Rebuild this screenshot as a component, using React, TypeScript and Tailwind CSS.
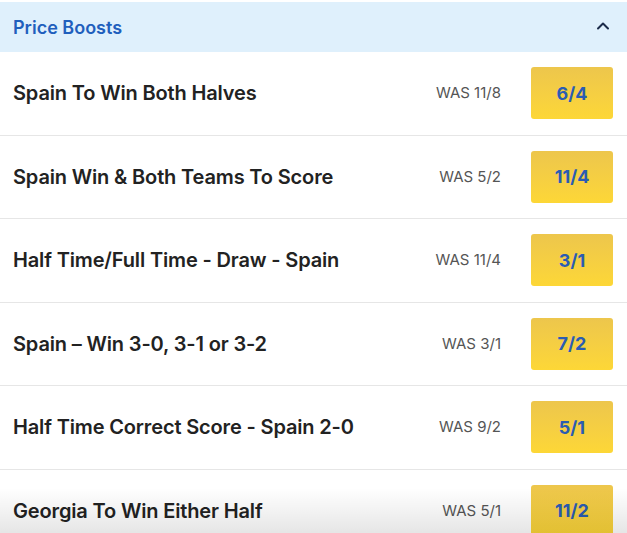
const boosts = [
  { name: "Spain To Win Both Halves", was: "11/8", price: "6/4" },
  { name: "Spain Win & Both Teams To Score", was: "5/2", price: "11/4" },
  { name: "Half Time/Full Time - Draw - Spain", was: "11/4", price: "3/1" },
  { name: "Spain – Win 3-0, 3-1 or 3-2", was: "3/1", price: "7/2" },
  { name: "Half Time Correct Score - Spain 2-0", was: "9/2", price: "5/1" },
  { name: "Georgia To Win Either Half", was: "5/1", price: "11/2" },
];

const App = () => {
  return (
    <div className="relative h-[533px] w-[627px] overflow-hidden bg-white font-['Inter',sans-serif]">
      <div className="mt-[2px] flex h-[50px] items-center justify-between bg-[#dff0fc] pl-[13px] pr-[14px]">
        <span className="text-[18px] font-semibold text-[#1f5fbd]">Price Boosts</span>
        <svg viewBox="0 0 24 24" fill="none" stroke="#1b2b4a" strokeWidth="2.4" strokeLinecap="round" strokeLinejoin="round" className="-mt-[3px] h-[20px] w-[20px]">
          <polyline points="6 15 12 9 18 15" />
        </svg>
      </div>

      {boosts.map((b) => (
        <div
          key={b.name}
          className="flex h-[83.5px] items-center border-b border-[#e6e6e6] pl-[13px] pr-[14px]"
        >
          <span className="flex-1 text-[20px] font-semibold tracking-[-0.15px] text-[#222]">{b.name}</span>
          <span className="mr-[30px] text-[15px] text-[#555]">WAS {b.was}</span>
          <button className="flex h-[52px] w-[82px] items-center justify-center rounded-[3px] bg-gradient-to-b from-[#edc64c] to-[#fdd736] text-[18px] font-bold text-[#2a5cb3]">
            {b.price}
          </button>
        </div>
      ))}

      <div className="pointer-events-none absolute bottom-0 left-0 h-[45px] w-full bg-gradient-to-b from-transparent to-black/10" />
    </div>
  );
};

export default App;
